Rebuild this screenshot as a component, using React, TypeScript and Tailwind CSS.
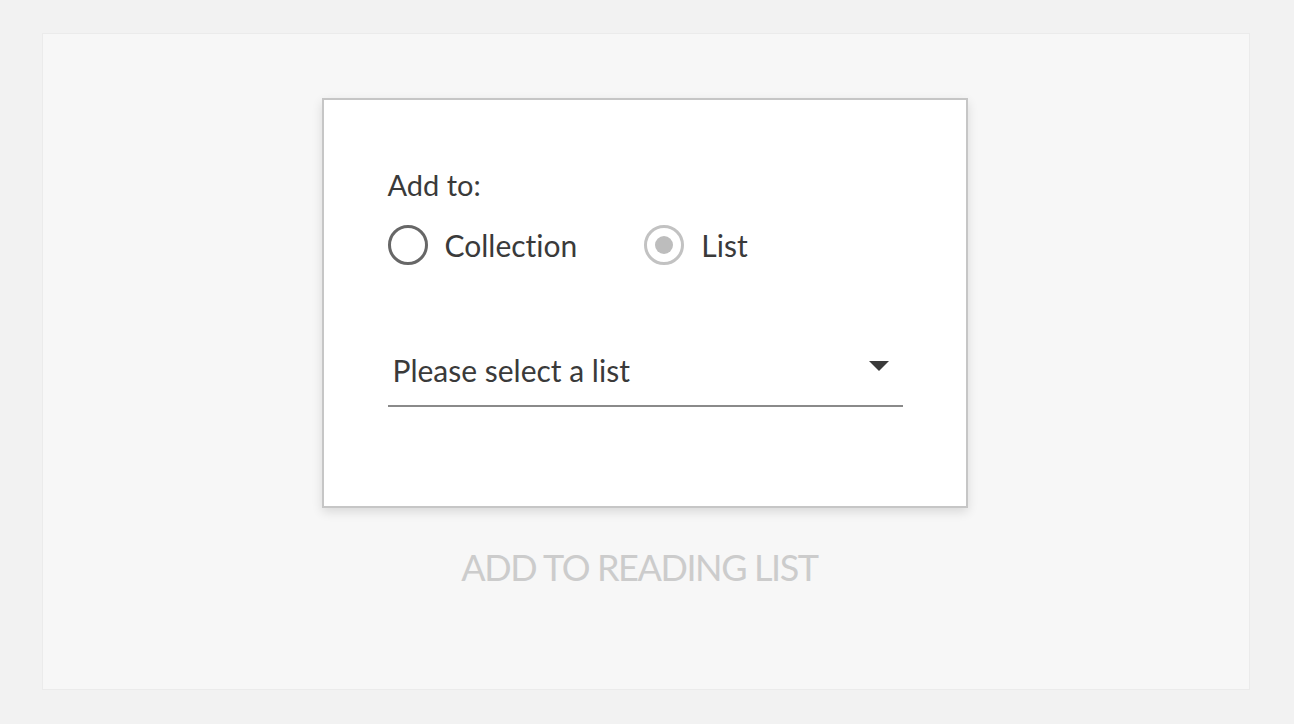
import { useState } from 'react';

export default function App() {
  const [target, setTarget] = useState<'collection' | 'list'>('list');

  return (
    <div className="min-h-screen w-full bg-[#f2f2f2] pt-[33px] pl-[42px] font-['Lato','Liberation_Sans',sans-serif] [font-variant-ligatures:none]">
      {/* panel */}
      <div className="w-[1208px] h-[657px] bg-[#f7f7f7] border border-[#ebebeb] flex flex-col items-center pt-[64px]">
        {/* card */}
        <div className="w-[646px] h-[410px] bg-white border-2 border-[#c6c6c6] shadow-[0_4px_10px_rgba(0,0,0,0.12)] ml-[-3px] pl-[64px] pr-[63px] pt-[68px]">
          <div className="text-[29px] leading-[34px] text-[#3a3a3a]">Add to:</div>

          <div className="flex items-center mt-[23px]">
            <button
              className="flex items-center gap-[17px]"
              onClick={() => setTarget('collection')}
            >
              <span className="w-[40px] h-[40px] rounded-full border-[3px] border-[#676767] flex items-center justify-center">
                {target === 'collection' && <span className="w-[18px] h-[18px] rounded-full bg-[#676767]" />}
              </span>
              <span className="text-[30px] leading-[36px] text-[#3a3a3a]">Collection</span>
            </button>
            <button
              className="flex items-center gap-[17px] ml-[67px]"
              onClick={() => setTarget('list')}
            >
              <span className="w-[40px] h-[40px] rounded-full border-[3px] border-[#c2c2c2] flex items-center justify-center">
                {target === 'list' && <span className="w-[18px] h-[18px] rounded-full bg-[#bdbdbd]" />}
              </span>
              <span className="text-[30px] leading-[36px] text-[#3a3a3a]">List</span>
            </button>
          </div>

          {/* select */}
          <div className="mt-[87px] border-b-2 border-[#8a8a8a] flex items-center justify-between pl-[5px] pr-[14px] pb-[17px]">
            <span className="text-[30px] leading-[36px] text-[#3a3a3a]">Please select a list</span>
            <svg width="20" height="10" viewBox="0 0 20 10" className="mb-[9px]">
              <path d="M0 0 L20 0 L10 10 Z" fill="#3a3a3a" />
            </svg>
          </div>
        </div>

        <div className="mt-[38px] ml-[-13px] text-[36px] leading-[42px] tracking-[-1.4px] text-[#cccccc] uppercase">
          Add to reading list
        </div>
      </div>
    </div>
  );
}
